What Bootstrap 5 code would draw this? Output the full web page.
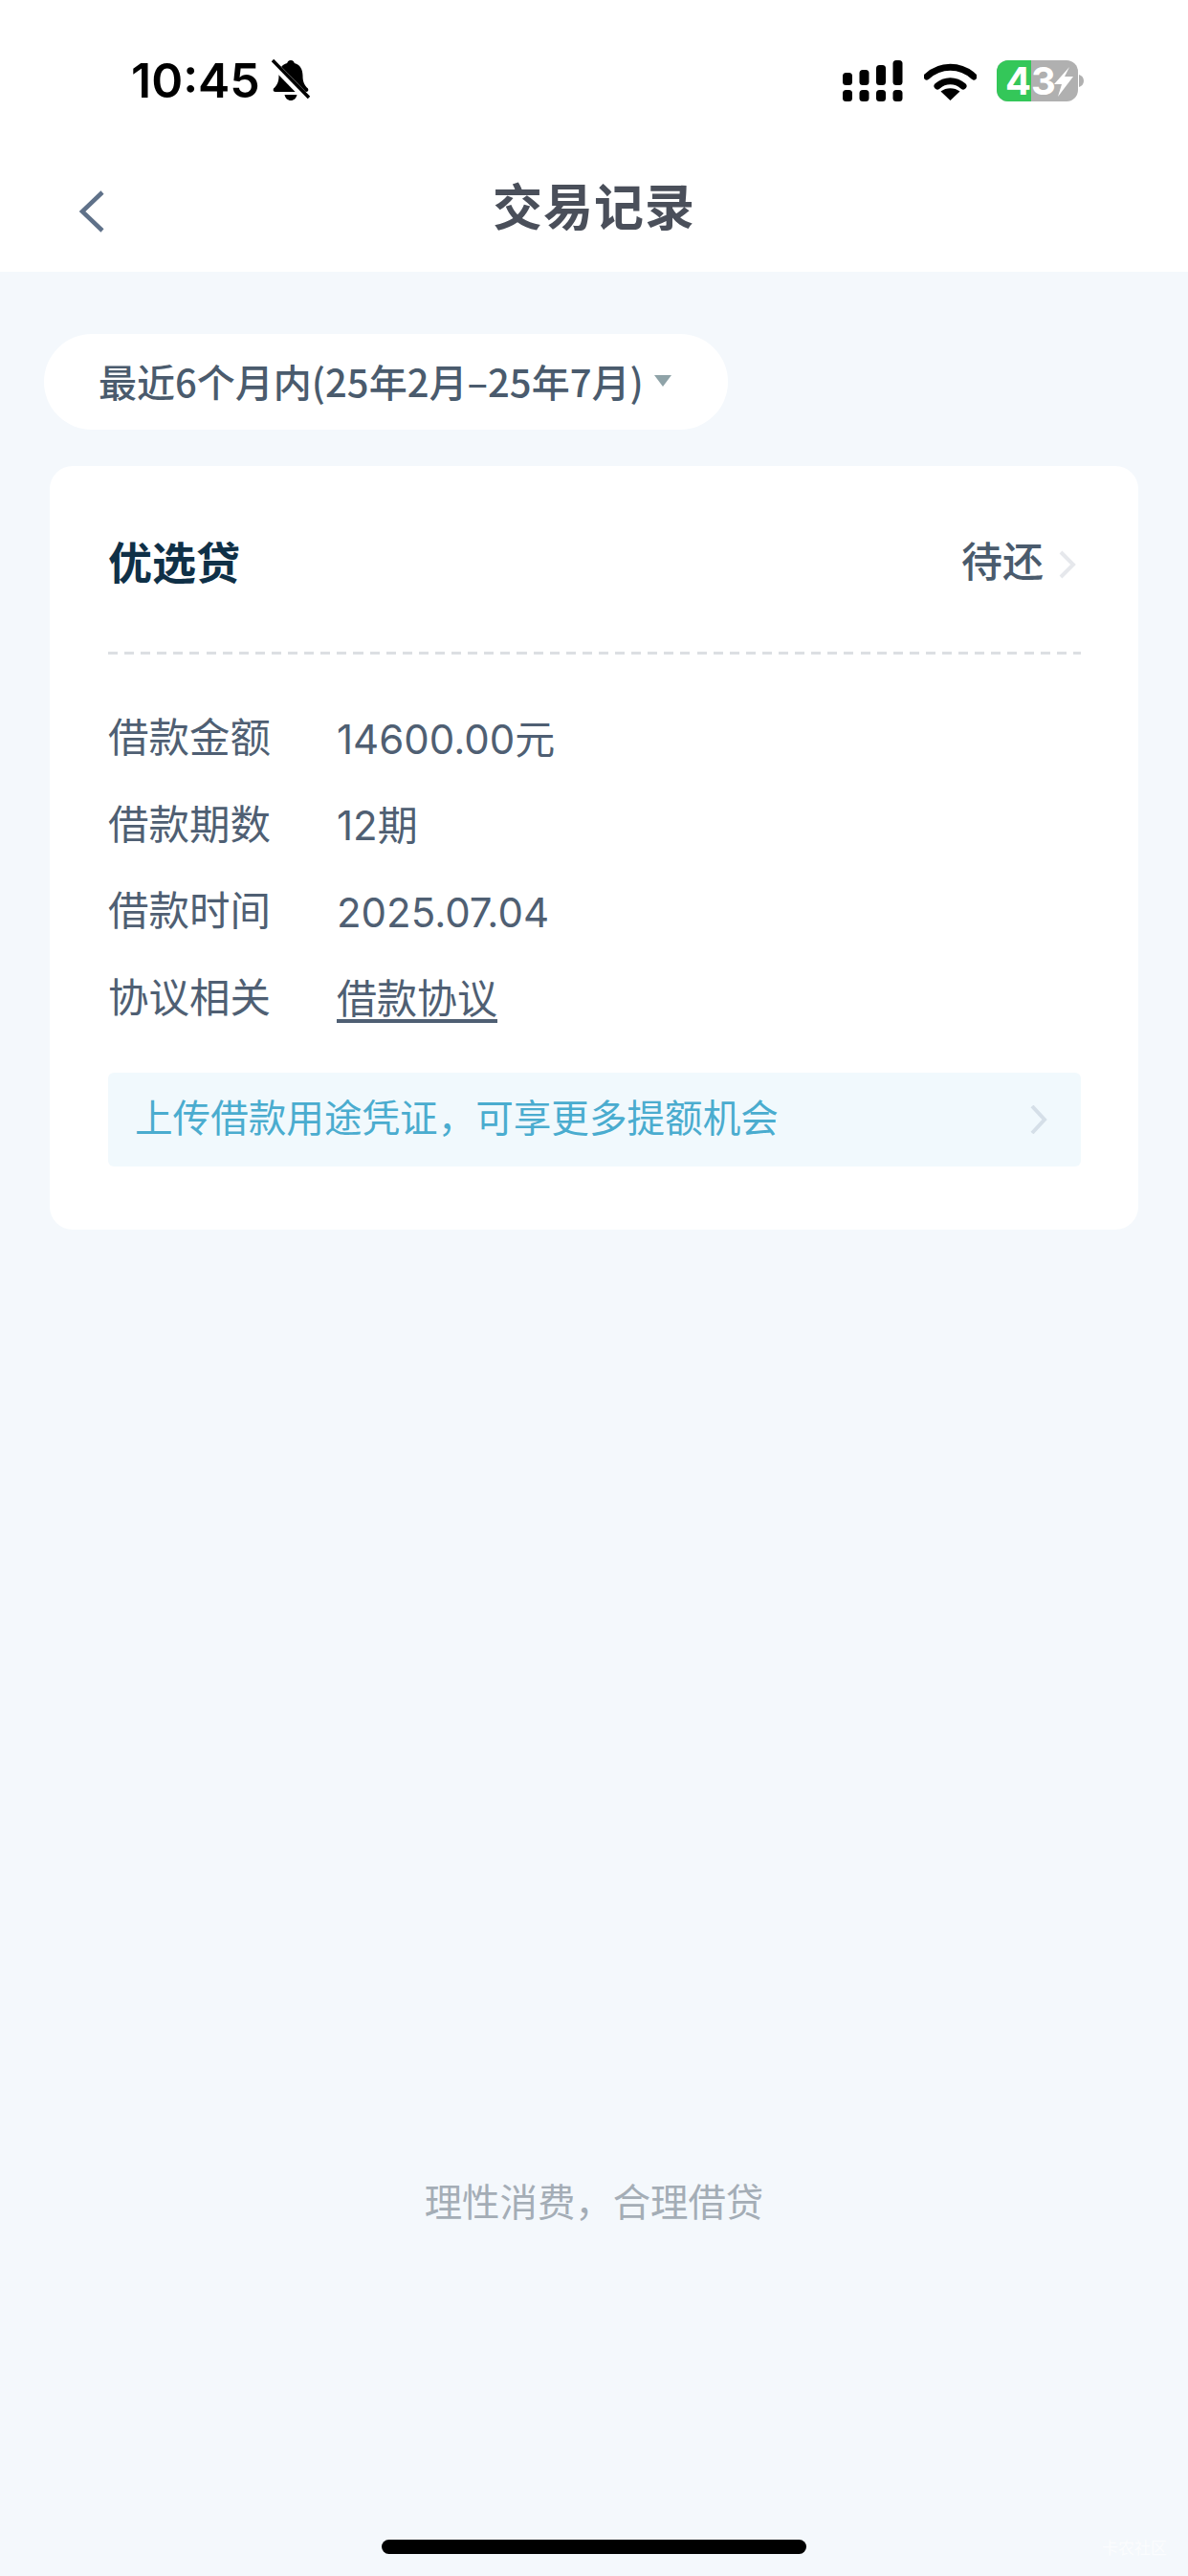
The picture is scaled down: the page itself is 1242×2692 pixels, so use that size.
<!DOCTYPE html>
<html lang="zh-CN">
  <head>
    <meta charset="UTF-8" />
    <meta name="viewport" content="width=device-width, initial-scale=1.0" />
    <title>交易记录</title>
    <link rel="stylesheet" href="https://cdn.jsdelivr.net/npm/bootstrap@5.3.3/dist/css/bootstrap.min.css" />
    <style>
      body {
        font-family: "Liberation Sans", "Noto Sans CJK SC", sans-serif;
        background: #f4f8fc;
        color: #4f5f73;
      }
      .screen { min-height: 2692px; position: relative; }
      .top-head { background: #fff; height: 284px; }
      .status-row { height: 152px; padding: 16px 109px 0 137px; }
      .clock { font-family: Inter, sans-serif; font-weight: 600; font-size: 50px; line-height: 1; color: #000; }
      .bell-icon { margin-left: 12px; }
      .wifi-icon { margin-left: 22px; }
      .batt-icon { margin-left: 21px; }
      .batt-num { font-family: Inter, sans-serif; font-weight: 700; font-size: 40px; fill: #fff; }
      .title-row { height: 132px; }
      .back-icon { position: absolute; left: 80px; top: 198px; }
      .page-title { font-size: 52px; font-weight: 700; color: #4a4f5a; margin: 0; line-height: 1; letter-spacing: 1px; }
      .range-pill { width: 715px; height: 100px; margin: 65px 0 0 46px; padding: 0 0 3px 57px; background: #fff; border-radius: 50px; font-family: "Noto Sans CJK SC", sans-serif; font-size: 40px; font-weight: 500; color: #4a5b6d; white-space: nowrap; }
      .range-arrow { width: 0; height: 0; margin-left: 11px; border-left: 9px solid transparent; border-right: 9px solid transparent; border-top: 12px solid #8fa3a8; }
      .loan-box { width: 1138px; margin: 38px 0 0 52px; padding: 0 60px 66px 61px; background: #fff; border-radius: 24px; }
      .loan-head { height: 194px; padding: 11px 5px 0 0; }
      .loan-name { font-size: 46px; font-weight: 700; color: #0f3047; }
      .loan-state { font-size: 43px; font-weight: 500; color: #4a5b6d; margin: 0 15px 2px 0; }
      .dash-line { height: 3px; margin-bottom: 43px; background: repeating-linear-gradient(90deg, #dcdfe3 0 10px, transparent 10px 17.1px); }
      .info-row { height: 90.5px; font-size: 42.5px; color: #4f5f73; }
      .info-key { width: 239px; }
      .info-val { font-family: Inter, "Noto Sans CJK SC", sans-serif; font-size: 42px; }
      .info-val a { color: inherit; text-underline-offset: 6px; }
      .tip-bar { height: 98px; margin-top: 32px; padding: 0 34px 0 28px; background: #f1f9fd; border-radius: 6px; font-size: 39.6px; color: #4aaccf; }
      .foot-note { margin-top: auto; line-height: 60px; font-size: 39.4px; color: #a4adb6; }
      .home-bar { width: 444px; height: 15px; margin: 322px auto 23px; background: #000; border-radius: 8px; }
      .water-mark { position: absolute; right: 22px; bottom: 20px; font-size: 17px; line-height: 1; color: #fff; opacity: .7; }
    </style>
    <script src="https://cdn.jsdelivr.net/npm/bootstrap@5.3.3/dist/js/bootstrap.bundle.min.js"></script>
  </head>
  <body>
    <div class="screen d-flex flex-column">
      <header class="top-head">
        <div class="status-row d-flex align-items-center">
          <span class="clock">10:45</span>
          <svg class="bell-icon" width="40" height="44" viewBox="0 0 40 44">
            <path d="M20 1c2.500 0 3.500 1.500 3.800 3 6 1.500 8.700 6.500 8.700 13 0 6 1.500 10 5.500 13.500 1 2-.2 3.500-2 3.500H4c-2 0-3-1.500-2-3.500C6 27 7.500 23 7.500 17c0-6.500 2.700-11.500 8.700-13C16.500 2.500 17.500 1 20 1Z" fill="#000"/>
            <path d="M13.500 37h13c-.8 3.800-3.300 6-6.500 6s-5.700-2.200-6.500-6Z" fill="#000"/>
            <path d="M1 4 37 41" stroke="#fff" stroke-width="8"/>
            <path d="M1 1 39 40" stroke="#000" stroke-width="3.500"/>
          </svg>
          <div class="ms-auto d-flex align-items-center">
            <svg width="63" height="43" viewBox="0 0 63 43" fill="#000">
              <rect x="0" y="13" width="10" height="13" rx="3.500"/>
              <rect x="17.500" y="10" width="10" height="16" rx="3.500"/>
              <rect x="35" y="5" width="10" height="21" rx="3.500"/>
              <rect x="52.500" y="0" width="10" height="26" rx="3.500"/>
              <rect x="0" y="31" width="10" height="12" rx="3.500"/>
              <rect x="17.500" y="31" width="10" height="12" rx="3.500"/>
              <rect x="35" y="31" width="10" height="12" rx="3.500"/>
              <rect x="52.500" y="31" width="10" height="12" rx="3.500"/>
            </svg>
            <svg class="wifi-icon" width="55" height="41" viewBox="0 0 55 41">
              <path d="M3 16C17 3 38 3 52 16" fill="none" stroke="#000" stroke-width="7" stroke-linecap="round"/>
              <path d="M14 26c8-7 19-7 27 0" fill="none" stroke="#000" stroke-width="7" stroke-linecap="round"/>
              <path d="M27.500 41 17.500 31.500c5.500-4.500 14.500-4.500 20 0Z" fill="#000"/>
            </svg>
            <svg class="batt-icon" width="91" height="53" viewBox="0 -5 91 53">
              <rect x="0" y="0" width="85" height="43" rx="12" fill="#b0b0b0"/>
              <path d="M12 0H36V43H12A12 12 0 0 1 0 31V12A12 12 0 0 1 12 0Z" fill="#34c759"/>
              <path d="M86 15c3 1 5 3 5 6.500S89 27 86 28Z" fill="#b0b0b0"/>
              <text class="batt-num" x="9" y="36">43</text>
              <path d="M76 7 60 25h8l-4 13 16-21h-9Z" fill="#fff"/>
            </svg>
          </div>
        </div>
        <div class="title-row d-flex align-items-center justify-content-center">
          <svg class="back-icon" width="32" height="46" viewBox="0 0 32 46">
            <path d="M27 3 6 23l21 20" fill="none" stroke="#5f7189" stroke-width="4.500"/>
          </svg>
          <h1 class="page-title">交易记录</h1>
        </div>
      </header>

      <main>
        <div class="range-pill d-flex align-items-center">
          <span>最近6个月内(25年2月–25年7月)</span>
          <span class="range-arrow"></span>
        </div>

        <section class="loan-box">
          <div class="loan-head d-flex align-items-center justify-content-between">
            <span class="loan-name">优选贷</span>
            <span class="d-flex align-items-center">
              <span class="loan-state">待还</span>
              <svg width="19" height="30" viewBox="0 0 19 30">
                <path d="M3 2 16 15 3 28" fill="none" stroke="#e6e8ec" stroke-width="4"/>
              </svg>
            </span>
          </div>
          <div class="dash-line"></div>

          <div class="info-row d-flex align-items-center"><span class="info-key">借款金额</span><span class="info-val">14600.00元</span></div>
          <div class="info-row d-flex align-items-center"><span class="info-key">借款期数</span><span class="info-val">12期</span></div>
          <div class="info-row d-flex align-items-center"><span class="info-key">借款时间</span><span class="info-val">2025.07.04</span></div>
          <div class="info-row d-flex align-items-center"><span class="info-key">协议相关</span><span class="info-val"><a href="#">借款协议</a></span></div>

          <div class="tip-bar d-flex align-items-center justify-content-between">
            <span>上传借款用途凭证&#xFF0C;可享更多提额机会</span>
            <svg width="20" height="30" viewBox="0 0 20 30">
              <path d="M3 1 16 15 3 29" fill="none" stroke="#d5dfe8" stroke-width="4"/>
            </svg>
          </div>
        </section>
      </main>

      <footer class="foot-note text-center">
        理性消费&#xFF0C;合理借贷
        <div class="home-bar"></div>
      </footer>
      <div class="water-mark">卡农社区</div>
    </div>
  </body>
</html>
